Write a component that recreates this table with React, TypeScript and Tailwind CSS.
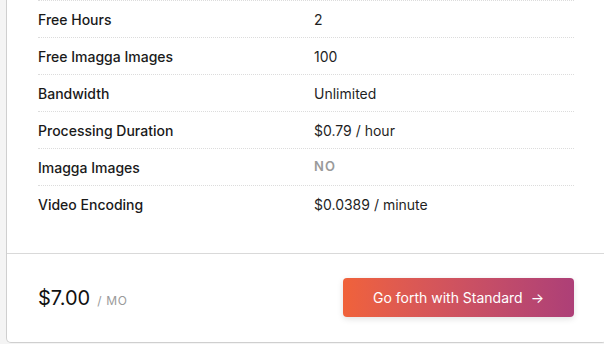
import React from 'react';

const rows = [
  { label: 'Free Hours', value: '2' },
  { label: 'Free Imagga Images', value: '100' },
  { label: 'Bandwidth', value: 'Unlimited' },
  { label: 'Processing Duration', value: '$0.79 / hour' },
  { label: 'Imagga Images', value: 'NO', muted: true },
  { label: 'Video Encoding', value: '$0.0389 / minute' },
];

const FeatureRow = ({ label, value, muted }: { label: string; value: string; muted?: boolean }) => (
  <div className="grid grid-cols-[276px_1fr] items-center h-[37px] border-t border-dotted border-[#dcdcdc]">
    <span className="text-[14px] font-[550] text-[#1a1a1a]">{label}</span>
    {muted ? (
      <span className="text-[13px] font-semibold tracking-[0.08em] text-[#9a9a9a]">{value}</span>
    ) : (
      <span className="text-[14px] text-[#1f1f1f]">{value}</span>
    )}
  </div>
);

export default function App() {
  return (
    <div
      className="w-[604px] h-[344px] overflow-hidden bg-[#f4f4f4] pl-[6px]"
      style={{ fontFamily: 'Inter, "Noto Sans", sans-serif' }}
    >
      <div className="w-[601px] h-[343px] bg-white border border-t-0 border-[#cfcfcf] rounded-b-[5px] flex flex-col">
        <div className="pl-[31px] pr-[32px] pb-[31px]">
          {rows.map((r) => (
            <FeatureRow key={r.label} {...r} />
          ))}
        </div>
        <div className="flex-1 border-t border-[#d9d9d9] flex items-center justify-between pl-[31px] pr-[32px] pb-[1px]">
          <div className="flex items-baseline gap-[7px]">
            <span className="text-[20px] font-normal text-[#111]">$7.00</span>
            <span className="text-[12px] tracking-[0.06em] text-[#9a9a9a]">/ MO</span>
          </div>
          <button className="w-[231px] h-[39px] rounded-[4px] bg-gradient-to-r from-[#f0623a] to-[#ad3f77] text-white text-[14px] font-normal shadow-[0_2px_6px_rgba(0,0,0,0.12)] flex items-center justify-center gap-[8px]">
            <span>Go forth with Standard</span>
            <span>→</span>
          </button>
        </div>
      </div>
    </div>
  );
}
